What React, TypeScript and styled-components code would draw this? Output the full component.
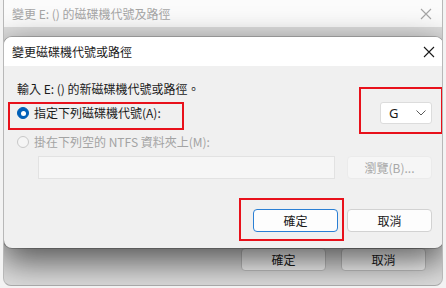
import React from "react";
import styled, { createGlobalStyle } from "styled-components";

const GlobalStyle = createGlobalStyle`
  html, body {
    margin: 0;
    padding: 0;
    background: #f3f3f3;
    width: 446px;
    height: 288px;
    overflow: hidden;
  }
  body {
    font-family: "Noto Sans CJK TC", "Noto Sans", sans-serif;
    font-size: 12px;
    color: #1a1a1a;
  }
`;

const App = () => {
  return (
    <>
      <GlobalStyle />
      <ParentWindow>
        <ParentTitle>
          <span>變更 E: () 的磁碟機代號及路徑</span>
          <CloseIcon color="#a6a6a6" />
        </ParentTitle>
        <ParentBody />
        <ParentFooter>
          <ParentButton>確定</ParentButton>
          <ParentButton>取消</ParentButton>
        </ParentFooter>

        <Dialog>
          <TitleBar>
            <span>變更磁碟機代號或路徑</span>
            <CloseIcon color="#1a1a1a" />
          </TitleBar>
          <Body>
            <Prompt>輸入 E: () 的新磁碟機代號或路徑。</Prompt>
            <OptionRow>
              <Radio checked>
                <RadioDot checked />
                指定下列磁碟機代號(A):
              </Radio>
              <Select>
                <span>G</span>
                <Chevron />
              </Select>
            </OptionRow>
            <Radio disabled>
              <RadioDot disabled />
              掛在下列空的 NTFS 資料夾上(M):
            </Radio>
            <FolderRow>
              <PathField />
              <Button disabled>瀏覽(B)...</Button>
            </FolderRow>
            <Footer>
              <Button primary>確定</Button>
              <Button>取消</Button>
            </Footer>
          </Body>
          <Marker style={{ left: 4, top: 65, width: 172, height: 24 }} />
          <Marker style={{ left: 355, top: 50, width: 80, height: 43 }} />
          <Marker style={{ left: 235, top: 161, width: 101, height: 39 }} />
        </Dialog>
      </ParentWindow>
    </>
  );
};

export default App;

const CloseIcon = ({ color }: { color: string }) => (
  <svg width="12" height="12" viewBox="0 0 12 12">
    <path d="M1 1 L11 11 M11 1 L1 11" stroke={color} strokeWidth="1.1" fill="none" />
  </svg>
);

const Chevron = () => (
  <svg width="10" height="6" viewBox="0 0 10 6">
    <path d="M0.5 0.5 L5 5 L9.5 0.5" stroke="#5a5a5a" strokeWidth="1" fill="none" />
  </svg>
);

const ParentWindow = styled.div`
  position: relative;
  margin-left: 3px;
  width: 440px;
  height: 286px;
  display: flex;
  flex-direction: column;
  background: #dedede;
  border-left: 1px solid #b8b8b8;
  border-right: 1px solid #b8b8b8;
  border-bottom: 1px solid #a8a8a8;
  border-radius: 0 0 8px 8px;
  overflow: hidden;
  box-sizing: border-box;
`;

const ParentTitle = styled.div`
  height: 27px;
  flex-shrink: 0;
  display: flex;
  align-items: center;
  justify-content: space-between;
  padding: 0 10px 0 8px;
  background: #fbfbfb;
  color: #a6a6a6;
  line-height: 16px;
`;

const ParentBody = styled.div`
  flex: 1;
`;

const ParentFooter = styled.div`
  display: flex;
  justify-content: flex-end;
  gap: 15px;
  padding: 0 16px 14px 0;
`;

const ParentButton = styled.div`
  width: 85px;
  height: 23px;
  box-sizing: border-box;
  display: flex;
  align-items: center;
  justify-content: center;
  border: 1px solid #c4c4c4;
  border-radius: 4px;
  background: #fbfbfb;
  color: #1a1a1a;
  line-height: 16px;
`;

const Dialog = styled.div`
  position: absolute;
  left: 0;
  top: 37px;
  width: 439px;
  height: 211px;
  display: flex;
  flex-direction: column;
  border-radius: 8px;
  background: #f0f0f0;
  box-shadow: 0 0 0 1px rgba(0, 0, 0, 0.2), 0 12px 34px 2px rgba(0, 0, 0, 0.62);
`;

const TitleBar = styled.div`
  height: 29px;
  flex-shrink: 0;
  display: flex;
  align-items: center;
  justify-content: space-between;
  padding: 0 8px 0 8px;
  background: #ffffff;
  border-radius: 8px 8px 0 0;
  line-height: 16px;
`;

const Body = styled.div`
  flex: 1;
  display: flex;
  flex-direction: column;
  padding: 15px 11px 0 13px;
`;

const Prompt = styled.div`
  line-height: 16px;
  height: 16px;
`;

const OptionRow = styled.div`
  margin-top: 5px;
  height: 22px;
  display: flex;
  align-items: center;
  justify-content: space-between;
`;

const Radio = styled.div<{ checked?: boolean; disabled?: boolean }>`
  display: flex;
  align-items: center;
  gap: 5px;
  line-height: 16px;
  height: 16px;
  color: ${(p) => (p.disabled ? "#a3a3a3" : "#1a1a1a")};
  margin-top: ${(p) => (p.disabled ? "10px" : "0")};
`;

const RadioDot = styled.span<{ checked?: boolean; disabled?: boolean }>`
  width: 12px;
  height: 12px;
  box-sizing: border-box;
  border-radius: 50%;
  flex-shrink: 0;
  background: ${(p) => (p.checked ? "#005fb8" : "#f5f5f5")};
  border: 1px solid ${(p) => (p.checked ? "#005fb8" : "#c8c8c8")};
  display: flex;
  align-items: center;
  justify-content: center;
  &::after {
    content: "";
    display: ${(p) => (p.checked ? "block" : "none")};
    width: 5px;
    height: 5px;
    border-radius: 50%;
    background: #ffffff;
  }
`;

const Select = styled.div`
  width: 52px;
  height: 22px;
  box-sizing: border-box;
  display: flex;
  align-items: center;
  justify-content: space-between;
  padding: 0 5px 0 8px;
  background: #ffffff;
  border: 1px solid #dcdcdc;
  border-radius: 3px;
  font-family: "Noto Sans", sans-serif;
  font-size: 13px;
`;

const FolderRow = styled.div`
  margin-top: 6px;
  margin-left: 21px;
  display: flex;
  align-items: center;
  gap: 12px;
`;

const PathField = styled.div`
  width: 297px;
  height: 23px;
  box-sizing: border-box;
  background: #f6f6f6;
  border: 1px solid #e2e2e2;
`;

const Button = styled.div<{ primary?: boolean; disabled?: boolean }>`
  width: 85px;
  height: 23px;
  box-sizing: border-box;
  display: flex;
  align-items: center;
  justify-content: center;
  line-height: 16px;
  border-radius: 4px;
  background: ${(p) => (p.disabled ? "#f6f6f6" : "#fdfdfd")};
  border: 1px solid ${(p) => (p.primary ? "#2a7fd4" : p.disabled ? "#ebebeb" : "#d2d2d2")};
  color: ${(p) => (p.disabled ? "#a8a8a8" : "#1a1a1a")};
`;

const Footer = styled.div`
  margin-top: 30px;
  display: flex;
  justify-content: flex-end;
  gap: 9px;
`;

const Marker = styled.div`
  position: absolute;
  border: 2px solid #e8111b;
`;
